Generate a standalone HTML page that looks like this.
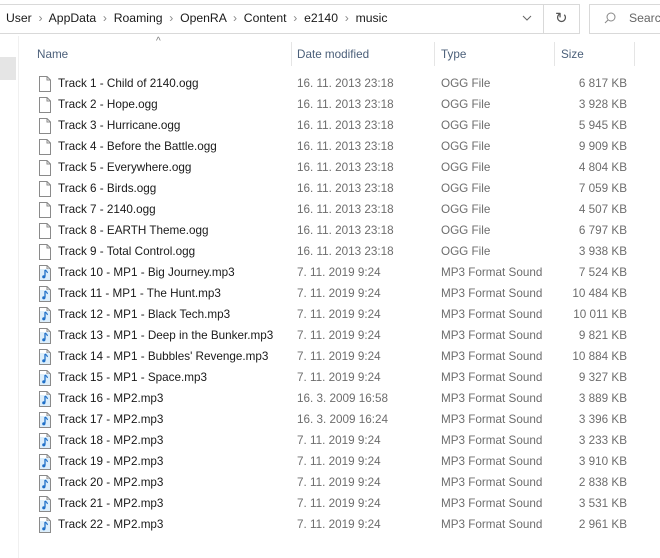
<!DOCTYPE html><html><head><style>
body{margin:0;width:660px;height:558px;background:#fff;font-family:"Liberation Sans",sans-serif;font-size:11.7px;position:relative;overflow:hidden}
.a{position:absolute}
.row{position:absolute;left:0;height:21px;width:660px}
.row span{position:absolute;top:3px;white-space:nowrap}
.n{left:58px;color:#1a1a1a}
.d{left:297px;color:#6d6d6d}
.t{left:441px;color:#6d6d6d}
.s{right:33px;color:#6d6d6d}
.ic{position:absolute;left:39px;top:2px}
.h{position:absolute;top:48px;color:#4c607a}
.v{position:absolute;top:42px;width:1px;height:24px;background:#e5e5e5}
</style></head><body>
<div class="a" style="left:-1px;top:4px;width:579px;height:28px;border:1px solid #d9d9d9"></div>
<div class="a" style="left:6px;top:11px;color:#1a1a1a;font-size:12.2px;white-space:nowrap">User &nbsp;<span style="color:#888">›</span>&nbsp; AppData &nbsp;<span style="color:#888">›</span>&nbsp; Roaming &nbsp;<span style="color:#888">›</span>&nbsp; OpenRA &nbsp;<span style="color:#888">›</span>&nbsp; Content &nbsp;<span style="color:#888">›</span>&nbsp; e2140 &nbsp;<span style="color:#888">›</span>&nbsp; music</div>
<svg class="a" style="left:522px;top:15px" width="10" height="7"><path d="M1 1L5 5L9 1" stroke="#666" fill="none"/></svg>
<div class="a" style="left:543px;top:5px;width:1px;height:28px;background:#d9d9d9"></div>
<div class="a" style="left:555px;top:9px;color:#555;font-size:15px">↻</div>
<div class="a" style="left:589px;top:4px;width:80px;height:28px;border:1px solid #d9d9d9"></div>
<svg class="a" style="left:604px;top:12px" width="12" height="12"><circle cx="7" cy="5" r="4" stroke="#888" fill="none"/><path d="M4 8L1 11" stroke="#888"/></svg>
<div class="a" style="left:629px;top:11px;color:#666;font-size:12.2px">Search</div>
<div class="a" style="left:0;top:57px;width:16px;height:23px;background:#e5e5e5"></div>
<div class="a" style="left:18px;top:36px;width:1px;height:522px;background:#f0f0f0"></div>
<div class="a" style="left:156px;top:36px;color:#777;font-size:10px">^</div>
<div class="h" style="left:37px">Name</div><div class="v" style="left:291px"></div>
<div class="h" style="left:297px">Date modified</div><div class="v" style="left:434px"></div>
<div class="h" style="left:441px">Type</div><div class="v" style="left:554px"></div>
<div class="h" style="left:561px">Size</div><div class="v" style="left:634px"></div>
<div id="rows"></div>
<script>
var r=[["Track 1 - Child of 2140.ogg","16. 11. 2013 23:18","OGG File","6 817 KB"],["Track 2 - Hope.ogg","16. 11. 2013 23:18","OGG File","3 928 KB"],["Track 3 - Hurricane.ogg","16. 11. 2013 23:18","OGG File","5 945 KB"],["Track 4 - Before the Battle.ogg","16. 11. 2013 23:18","OGG File","9 909 KB"],["Track 5 - Everywhere.ogg","16. 11. 2013 23:18","OGG File","4 804 KB"],["Track 6 - Birds.ogg","16. 11. 2013 23:18","OGG File","7 059 KB"],["Track 7 - 2140.ogg","16. 11. 2013 23:18","OGG File","4 507 KB"],["Track 8 - EARTH Theme.ogg","16. 11. 2013 23:18","OGG File","6 797 KB"],["Track 9 - Total Control.ogg","16. 11. 2013 23:18","OGG File","3 938 KB"],["Track 10 - MP1 - Big Journey.mp3","7. 11. 2019 9:24","MP3 Format Sound","7 524 KB"],["Track 11 - MP1 - The Hunt.mp3","7. 11. 2019 9:24","MP3 Format Sound","10 484 KB"],["Track 12 - MP1 - Black Tech.mp3","7. 11. 2019 9:24","MP3 Format Sound","10 011 KB"],["Track 13 - MP1 - Deep in the Bunker.mp3","7. 11. 2019 9:24","MP3 Format Sound","9 821 KB"],["Track 14 - MP1 - Bubbles' Revenge.mp3","7. 11. 2019 9:24","MP3 Format Sound","10 884 KB"],["Track 15 - MP1 - Space.mp3","7. 11. 2019 9:24","MP3 Format Sound","9 327 KB"],["Track 16 - MP2.mp3","16. 3. 2009 16:58","MP3 Format Sound","3 889 KB"],["Track 17 - MP2.mp3","16. 3. 2009 16:24","MP3 Format Sound","3 396 KB"],["Track 18 - MP2.mp3","7. 11. 2019 9:24","MP3 Format Sound","3 233 KB"],["Track 19 - MP2.mp3","7. 11. 2019 9:24","MP3 Format Sound","3 910 KB"],["Track 20 - MP2.mp3","7. 11. 2019 9:24","MP3 Format Sound","2 838 KB"],["Track 21 - MP2.mp3","7. 11. 2019 9:24","MP3 Format Sound","3 531 KB"],["Track 22 - MP2.mp3","7. 11. 2019 9:24","MP3 Format Sound","2 961 KB"]];
var h="";r.forEach(function(x,i){var mp=i>=9;
var ic='<svg class="ic" width="12" height="16"><path d="M0.5 0.5H8L11.5 4V15.5H0.5Z" fill="#fff" stroke="#8a8a8a"/><path d="M8 0.5V4H11.5" fill="none" stroke="#8a8a8a"/>'+(mp?'<rect x="1" y="4" width="10" height="11" fill="#dceefb"/><path d="M6 5V11.5" stroke="#1e6fc8" stroke-width="1.3"/><circle cx="4.8" cy="11.8" r="1.6" fill="#1e6fc8"/><path d="M6 5Q8 6 8.5 8" stroke="#1e6fc8" fill="none"/>':'')+'</svg>';
h+='<div class="row" style="top:'+(74+i*21)+'px">'+ic+'<span class="n">'+x[0]+'</span><span class="d">'+x[1]+'</span><span class="t">'+x[2]+'</span><span class="s">'+x[3]+'</span></div>';});
document.getElementById("rows").innerHTML=h;
</script>
</body></html>
